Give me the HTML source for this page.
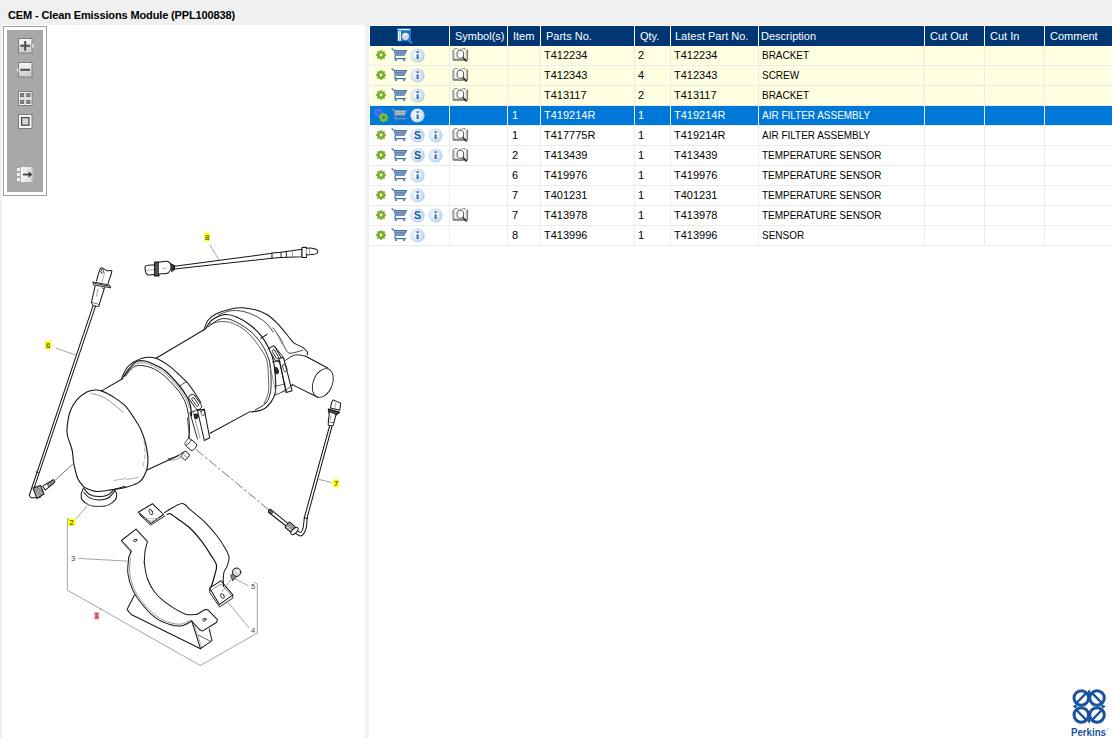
<!DOCTYPE html>
<html><head><meta charset="utf-8"><style>
html,body{margin:0;padding:0;}
body{width:1112px;height:738px;overflow:hidden;background:#f0f0f0;position:relative;font-family:"Liberation Sans",sans-serif;}
.abs{position:absolute;}
.ic{position:absolute;}
.title{position:absolute;left:8px;top:9px;font-size:11px;font-weight:bold;color:#000;white-space:nowrap;letter-spacing:-0.13px;}
.panel{position:absolute;background:#fff;}
.hdr{position:absolute;top:26px;height:20px;background:#003773;}
.ht{position:absolute;top:30px;color:#fff;font-size:11px;white-space:nowrap;}
.row{position:absolute;left:370px;width:742px;height:19px;}
.hl{position:absolute;left:370px;width:742px;height:1px;background:#ebebeb;}
.vl{position:absolute;width:1px;background:#ebebeb;}
.ct{position:absolute;font-size:11px;white-space:nowrap;color:#000;}
.up{transform:scaleX(0.906);transform-origin:0 0;}
</style></head><body>
<div class="title">CEM - Clean Emissions Module (PPL100838)</div>
<div class="panel" style="left:2px;top:25px;width:363px;height:713px;"></div>
<div class="panel" style="left:369px;top:25px;width:743px;height:713px;"></div>
<div class="abs" style="left:3px;top:26px;width:42px;height:168px;border:1px solid #a0a0a0;background:#fff;"></div>
<div class="abs" style="left:7px;top:30px;width:36px;height:162px;background:#a8a8a8;"></div>

<div class="hdr" style="left:370px;width:742px;"></div>
<div class="abs" style="left:449px;top:26px;width:1px;height:20px;background:#fff;"></div>
<div class="abs" style="left:507px;top:26px;width:1px;height:20px;background:#fff;"></div>
<div class="abs" style="left:540px;top:26px;width:1px;height:20px;background:#fff;"></div>
<div class="abs" style="left:634px;top:26px;width:1px;height:20px;background:#fff;"></div>
<div class="abs" style="left:670px;top:26px;width:1px;height:20px;background:#fff;"></div>
<div class="abs" style="left:758px;top:26px;width:1px;height:20px;background:#fff;"></div>
<div class="abs" style="left:924px;top:26px;width:1px;height:20px;background:#fff;"></div>
<div class="abs" style="left:984px;top:26px;width:1px;height:20px;background:#fff;"></div>
<div class="abs" style="left:1044px;top:26px;width:1px;height:20px;background:#fff;"></div>
<div class="ht" style="left:455px;">Symbol(s)</div>
<div class="ht" style="left:513px;">Item</div>
<div class="ht" style="left:546px;">Parts No.</div>
<div class="ht" style="left:640px;">Qty.</div>
<div class="ht" style="left:675px;">Latest Part No.</div>
<div class="ht" style="left:761px;">Description</div>
<div class="ht" style="left:930px;">Cut Out</div>
<div class="ht" style="left:990px;">Cut In</div>
<div class="ht" style="left:1050px;">Comment</div>
<svg class="ic" style="left:397px;top:28px" width="17" height="17" viewBox="0 0 17 17"><rect x="0" y="0" width="14" height="13.5" fill="#1f74c2"/><rect x="1" y="1" width="12" height="1.2" fill="#f4f8fc"/><rect x="1" y="3.2" width="3" height="9.5" fill="#f4f8fc"/><path d="M2.6 4.5v0.8M2.6 6.5v0.8M2.6 8.5v0.8M2.6 10.5v0.8" stroke="#1f74c2" stroke-width="0.9"/><circle cx="8.5" cy="8.3" r="4.6" fill="#1f74c2"/><circle cx="8.5" cy="8.3" r="3.6" fill="#d4d8de"/><path d="M6.8 6.6c1-0.7 2.4-0.7 3.3 0.2" stroke="#fff" stroke-width="1.1" fill="none"/><path d="M11.2 12l3.8 3.3" stroke="#2a7ccc" stroke-width="2.4"/></svg>
<div class="row" style="top:46px;background:#ffffe1;"></div>
<div class="hl" style="top:65px;"></div>
<svg class="ic" style="left:375px;top:49px" width="12" height="12" viewBox="0 0 12 12"><circle cx="6" cy="6" r="1.6" fill="#eaffd0"/><path d="M5.50 0.92 L6.50 0.92 L7.16 2.17 L7.89 2.47 L9.24 2.06 L9.94 2.76 L9.53 4.11 L9.83 4.84 L11.08 5.50 L11.08 6.50 L9.83 7.16 L9.53 7.89 L9.94 9.24 L9.24 9.94 L7.89 9.53 L7.16 9.83 L6.50 11.08 L5.50 11.08 L4.84 9.83 L4.11 9.53 L2.76 9.94 L2.06 9.24 L2.47 7.89 L2.17 7.16 L0.92 6.50 L0.92 5.50 L2.17 4.84 L2.47 4.11 L2.06 2.76 L2.76 2.06 L4.11 2.47 L4.84 2.17ZM7.40 6.00A1.4 1.4 0 1 0 4.60 6.00A1.4 1.4 0 1 0 7.40 6.00Z" fill="#79ad2b" fill-rule="evenodd"/></svg>
<svg class="ic" style="left:391px;top:48px" width="17" height="14" viewBox="0 0 17 14"><path d="M0.6 0.6l2.3 1.6" stroke="#4870a8" stroke-width="1.3"/><path d="M2.8 2.1h13.4l-2.6 5.6h-9.8z" fill="#4870a8"/><rect x="4.30" y="3.2" width="1.1" height="1.1" fill="#fff" opacity="0.85"/><rect x="4.30" y="5.3" width="1.1" height="1.1" fill="#fff" opacity="0.85"/><rect x="6.35" y="3.2" width="1.1" height="1.1" fill="#fff" opacity="0.85"/><rect x="6.35" y="5.3" width="1.1" height="1.1" fill="#fff" opacity="0.85"/><rect x="8.40" y="3.2" width="1.1" height="1.1" fill="#fff" opacity="0.85"/><rect x="8.40" y="5.3" width="1.1" height="1.1" fill="#fff" opacity="0.85"/><rect x="10.45" y="3.2" width="1.1" height="1.1" fill="#fff" opacity="0.85"/><rect x="10.45" y="5.3" width="1.1" height="1.1" fill="#fff" opacity="0.85"/><rect x="12.50" y="3.2" width="1.1" height="1.1" fill="#fff" opacity="0.85"/><rect x="12.50" y="5.3" width="1.1" height="1.1" fill="#fff" opacity="0.85"/><path d="M4 7.5v3M3.6 10.6h11.3" stroke="#4870a8" stroke-width="1.2"/><circle cx="4.8" cy="12.1" r="1.1" fill="#3f7fcc"/><circle cx="13" cy="12.1" r="1.1" fill="#3f7fcc"/></svg>
<svg class="ic" style="left:410px;top:48px" width="15" height="15" viewBox="0 0 15 15"><defs><radialGradient id="ig410_48" cx="0.42" cy="0.45" r="0.62"><stop offset="0" stop-color="#f8fbfe"/><stop offset="0.5" stop-color="#dfeaf6"/><stop offset="0.85" stop-color="#bcd5ec"/><stop offset="1" stop-color="#98bde2"/></radialGradient></defs><circle cx="7.5" cy="7.5" r="7.1" fill="url(#ig410_48)"/><rect x="6.6" y="6.4" width="2" height="4.6" fill="#3a64a8"/><rect x="6.6" y="3.2" width="2" height="1.8" fill="#3a64a8"/></svg>
<svg class="ic" style="left:452px;top:47px" width="17" height="15" viewBox="0 0 17 15"><path d="M1 2.6v10.6h14.6v-10.6" fill="#c8c8c8" stroke="#77735a" stroke-width="1"/><path d="M2.4 1.6h2.8M10.4 1.6h2.9" stroke="#8c8660" stroke-width="1.2"/><path d="M1.8 2.3c2 -0.8 4.1 -0.8 5.8 0.4c1.8 -1.2 4 -1.2 6.6 -0.4v10c-2.3 -0.6 -4.6 -0.4 -6.6 0.7c-1.9 -1.1 -3.9 -1.2 -5.8 -0.7z" fill="#f7f7f7" stroke="#9a9a9a" stroke-width="0.5"/><path d="M2.5 3.5v8.5" stroke="#d0d0d0" stroke-width="1"/><path d="M1.6 12.6c2 -0.6 4.1 -0.4 6 0.8c2 -1.1 4.5 -1.2 6.8 -0.7" fill="none" stroke="#6a6a6a" stroke-width="0.9"/><ellipse cx="8.3" cy="7.3" rx="3.3" ry="4.1" fill="#fcfcfc" stroke="#3c3c3c" stroke-width="0.9"/><path d="M10.8 10.3l3.8 4.2" stroke="#2a2a2a" stroke-width="1.5"/></svg>
<div class="ct" style="left:512px;top:49px;color:#000"></div>
<div class="ct" style="left:544px;top:49px;color:#000">T412234</div>
<div class="ct" style="left:638px;top:49px;color:#000">2</div>
<div class="ct" style="left:674px;top:49px;color:#000">T412234</div>
<div class="ct up" style="left:762px;top:49px;color:#000">BRACKET</div>
<div class="row" style="top:66px;background:#ffffe1;"></div>
<div class="hl" style="top:85px;"></div>
<svg class="ic" style="left:375px;top:69px" width="12" height="12" viewBox="0 0 12 12"><circle cx="6" cy="6" r="1.6" fill="#eaffd0"/><path d="M5.50 0.92 L6.50 0.92 L7.16 2.17 L7.89 2.47 L9.24 2.06 L9.94 2.76 L9.53 4.11 L9.83 4.84 L11.08 5.50 L11.08 6.50 L9.83 7.16 L9.53 7.89 L9.94 9.24 L9.24 9.94 L7.89 9.53 L7.16 9.83 L6.50 11.08 L5.50 11.08 L4.84 9.83 L4.11 9.53 L2.76 9.94 L2.06 9.24 L2.47 7.89 L2.17 7.16 L0.92 6.50 L0.92 5.50 L2.17 4.84 L2.47 4.11 L2.06 2.76 L2.76 2.06 L4.11 2.47 L4.84 2.17ZM7.40 6.00A1.4 1.4 0 1 0 4.60 6.00A1.4 1.4 0 1 0 7.40 6.00Z" fill="#79ad2b" fill-rule="evenodd"/></svg>
<svg class="ic" style="left:391px;top:68px" width="17" height="14" viewBox="0 0 17 14"><path d="M0.6 0.6l2.3 1.6" stroke="#4870a8" stroke-width="1.3"/><path d="M2.8 2.1h13.4l-2.6 5.6h-9.8z" fill="#4870a8"/><rect x="4.30" y="3.2" width="1.1" height="1.1" fill="#fff" opacity="0.85"/><rect x="4.30" y="5.3" width="1.1" height="1.1" fill="#fff" opacity="0.85"/><rect x="6.35" y="3.2" width="1.1" height="1.1" fill="#fff" opacity="0.85"/><rect x="6.35" y="5.3" width="1.1" height="1.1" fill="#fff" opacity="0.85"/><rect x="8.40" y="3.2" width="1.1" height="1.1" fill="#fff" opacity="0.85"/><rect x="8.40" y="5.3" width="1.1" height="1.1" fill="#fff" opacity="0.85"/><rect x="10.45" y="3.2" width="1.1" height="1.1" fill="#fff" opacity="0.85"/><rect x="10.45" y="5.3" width="1.1" height="1.1" fill="#fff" opacity="0.85"/><rect x="12.50" y="3.2" width="1.1" height="1.1" fill="#fff" opacity="0.85"/><rect x="12.50" y="5.3" width="1.1" height="1.1" fill="#fff" opacity="0.85"/><path d="M4 7.5v3M3.6 10.6h11.3" stroke="#4870a8" stroke-width="1.2"/><circle cx="4.8" cy="12.1" r="1.1" fill="#3f7fcc"/><circle cx="13" cy="12.1" r="1.1" fill="#3f7fcc"/></svg>
<svg class="ic" style="left:410px;top:68px" width="15" height="15" viewBox="0 0 15 15"><defs><radialGradient id="ig410_68" cx="0.42" cy="0.45" r="0.62"><stop offset="0" stop-color="#f8fbfe"/><stop offset="0.5" stop-color="#dfeaf6"/><stop offset="0.85" stop-color="#bcd5ec"/><stop offset="1" stop-color="#98bde2"/></radialGradient></defs><circle cx="7.5" cy="7.5" r="7.1" fill="url(#ig410_68)"/><rect x="6.6" y="6.4" width="2" height="4.6" fill="#3a64a8"/><rect x="6.6" y="3.2" width="2" height="1.8" fill="#3a64a8"/></svg>
<svg class="ic" style="left:452px;top:67px" width="17" height="15" viewBox="0 0 17 15"><path d="M1 2.6v10.6h14.6v-10.6" fill="#c8c8c8" stroke="#77735a" stroke-width="1"/><path d="M2.4 1.6h2.8M10.4 1.6h2.9" stroke="#8c8660" stroke-width="1.2"/><path d="M1.8 2.3c2 -0.8 4.1 -0.8 5.8 0.4c1.8 -1.2 4 -1.2 6.6 -0.4v10c-2.3 -0.6 -4.6 -0.4 -6.6 0.7c-1.9 -1.1 -3.9 -1.2 -5.8 -0.7z" fill="#f7f7f7" stroke="#9a9a9a" stroke-width="0.5"/><path d="M2.5 3.5v8.5" stroke="#d0d0d0" stroke-width="1"/><path d="M1.6 12.6c2 -0.6 4.1 -0.4 6 0.8c2 -1.1 4.5 -1.2 6.8 -0.7" fill="none" stroke="#6a6a6a" stroke-width="0.9"/><ellipse cx="8.3" cy="7.3" rx="3.3" ry="4.1" fill="#fcfcfc" stroke="#3c3c3c" stroke-width="0.9"/><path d="M10.8 10.3l3.8 4.2" stroke="#2a2a2a" stroke-width="1.5"/></svg>
<div class="ct" style="left:512px;top:69px;color:#000"></div>
<div class="ct" style="left:544px;top:69px;color:#000">T412343</div>
<div class="ct" style="left:638px;top:69px;color:#000">4</div>
<div class="ct" style="left:674px;top:69px;color:#000">T412343</div>
<div class="ct up" style="left:762px;top:69px;color:#000">SCREW</div>
<div class="row" style="top:86px;background:#ffffe1;"></div>
<div class="hl" style="top:105px;"></div>
<svg class="ic" style="left:375px;top:89px" width="12" height="12" viewBox="0 0 12 12"><circle cx="6" cy="6" r="1.6" fill="#eaffd0"/><path d="M5.50 0.92 L6.50 0.92 L7.16 2.17 L7.89 2.47 L9.24 2.06 L9.94 2.76 L9.53 4.11 L9.83 4.84 L11.08 5.50 L11.08 6.50 L9.83 7.16 L9.53 7.89 L9.94 9.24 L9.24 9.94 L7.89 9.53 L7.16 9.83 L6.50 11.08 L5.50 11.08 L4.84 9.83 L4.11 9.53 L2.76 9.94 L2.06 9.24 L2.47 7.89 L2.17 7.16 L0.92 6.50 L0.92 5.50 L2.17 4.84 L2.47 4.11 L2.06 2.76 L2.76 2.06 L4.11 2.47 L4.84 2.17ZM7.40 6.00A1.4 1.4 0 1 0 4.60 6.00A1.4 1.4 0 1 0 7.40 6.00Z" fill="#79ad2b" fill-rule="evenodd"/></svg>
<svg class="ic" style="left:391px;top:88px" width="17" height="14" viewBox="0 0 17 14"><path d="M0.6 0.6l2.3 1.6" stroke="#4870a8" stroke-width="1.3"/><path d="M2.8 2.1h13.4l-2.6 5.6h-9.8z" fill="#4870a8"/><rect x="4.30" y="3.2" width="1.1" height="1.1" fill="#fff" opacity="0.85"/><rect x="4.30" y="5.3" width="1.1" height="1.1" fill="#fff" opacity="0.85"/><rect x="6.35" y="3.2" width="1.1" height="1.1" fill="#fff" opacity="0.85"/><rect x="6.35" y="5.3" width="1.1" height="1.1" fill="#fff" opacity="0.85"/><rect x="8.40" y="3.2" width="1.1" height="1.1" fill="#fff" opacity="0.85"/><rect x="8.40" y="5.3" width="1.1" height="1.1" fill="#fff" opacity="0.85"/><rect x="10.45" y="3.2" width="1.1" height="1.1" fill="#fff" opacity="0.85"/><rect x="10.45" y="5.3" width="1.1" height="1.1" fill="#fff" opacity="0.85"/><rect x="12.50" y="3.2" width="1.1" height="1.1" fill="#fff" opacity="0.85"/><rect x="12.50" y="5.3" width="1.1" height="1.1" fill="#fff" opacity="0.85"/><path d="M4 7.5v3M3.6 10.6h11.3" stroke="#4870a8" stroke-width="1.2"/><circle cx="4.8" cy="12.1" r="1.1" fill="#3f7fcc"/><circle cx="13" cy="12.1" r="1.1" fill="#3f7fcc"/></svg>
<svg class="ic" style="left:410px;top:88px" width="15" height="15" viewBox="0 0 15 15"><defs><radialGradient id="ig410_88" cx="0.42" cy="0.45" r="0.62"><stop offset="0" stop-color="#f8fbfe"/><stop offset="0.5" stop-color="#dfeaf6"/><stop offset="0.85" stop-color="#bcd5ec"/><stop offset="1" stop-color="#98bde2"/></radialGradient></defs><circle cx="7.5" cy="7.5" r="7.1" fill="url(#ig410_88)"/><rect x="6.6" y="6.4" width="2" height="4.6" fill="#3a64a8"/><rect x="6.6" y="3.2" width="2" height="1.8" fill="#3a64a8"/></svg>
<svg class="ic" style="left:452px;top:87px" width="17" height="15" viewBox="0 0 17 15"><path d="M1 2.6v10.6h14.6v-10.6" fill="#c8c8c8" stroke="#77735a" stroke-width="1"/><path d="M2.4 1.6h2.8M10.4 1.6h2.9" stroke="#8c8660" stroke-width="1.2"/><path d="M1.8 2.3c2 -0.8 4.1 -0.8 5.8 0.4c1.8 -1.2 4 -1.2 6.6 -0.4v10c-2.3 -0.6 -4.6 -0.4 -6.6 0.7c-1.9 -1.1 -3.9 -1.2 -5.8 -0.7z" fill="#f7f7f7" stroke="#9a9a9a" stroke-width="0.5"/><path d="M2.5 3.5v8.5" stroke="#d0d0d0" stroke-width="1"/><path d="M1.6 12.6c2 -0.6 4.1 -0.4 6 0.8c2 -1.1 4.5 -1.2 6.8 -0.7" fill="none" stroke="#6a6a6a" stroke-width="0.9"/><ellipse cx="8.3" cy="7.3" rx="3.3" ry="4.1" fill="#fcfcfc" stroke="#3c3c3c" stroke-width="0.9"/><path d="M10.8 10.3l3.8 4.2" stroke="#2a2a2a" stroke-width="1.5"/></svg>
<div class="ct" style="left:512px;top:89px;color:#000"></div>
<div class="ct" style="left:544px;top:89px;color:#000">T413117</div>
<div class="ct" style="left:638px;top:89px;color:#000">2</div>
<div class="ct" style="left:674px;top:89px;color:#000">T413117</div>
<div class="ct up" style="left:762px;top:89px;color:#000">BRACKET</div>
<div class="row" style="top:106px;background:#0078d7;"></div>
<div class="hl" style="top:125px;"></div>
<svg class="ic" style="left:373px;top:107px" width="17" height="17" viewBox="0 0 17 17"><path d="M5.01 0.52 L5.99 0.52 L6.63 1.77 L7.34 2.06 L8.67 1.63 L9.37 2.33 L8.94 3.66 L9.23 4.37 L10.48 5.01 L10.48 5.99 L9.23 6.63 L8.94 7.34 L9.37 8.67 L8.67 9.37 L7.34 8.94 L6.63 9.23 L5.99 10.48 L5.01 10.48 L4.37 9.23 L3.66 8.94 L2.33 9.37 L1.63 8.67 L2.06 7.34 L1.77 6.63 L0.52 5.99 L0.52 5.01 L1.77 4.37 L2.06 3.66 L1.63 2.33 L2.33 1.63 L3.66 2.06 L4.37 1.77ZM6.90 5.50A1.4 1.4 0 1 0 4.10 5.50A1.4 1.4 0 1 0 6.90 5.50Z" fill="#4f6ff0" fill-rule="evenodd"/><path d="M10.12 5.72 L11.08 5.72 L11.70 6.96 L12.39 7.25 L13.71 6.81 L14.39 7.49 L13.95 8.81 L14.24 9.50 L15.48 10.12 L15.48 11.08 L14.24 11.70 L13.95 12.39 L14.39 13.71 L13.71 14.39 L12.39 13.95 L11.70 14.24 L11.08 15.48 L10.12 15.48 L9.50 14.24 L8.81 13.95 L7.49 14.39 L6.81 13.71 L7.25 12.39 L6.96 11.70 L5.72 11.08 L5.72 10.12 L6.96 9.50 L7.25 8.81 L6.81 7.49 L7.49 6.81 L8.81 7.25 L9.50 6.96ZM12.00 10.60A1.4 1.4 0 1 0 9.20 10.60A1.4 1.4 0 1 0 12.00 10.60Z" fill="#84c021" fill-rule="evenodd"/></svg>
<svg class="ic" style="left:391px;top:108px" width="17" height="14" viewBox="0 0 17 14"><path d="M0.6 0.6l2.3 1.6" stroke="#8794a6" stroke-width="1.3"/><path d="M2.8 2.1h13.4l-2.6 5.6h-9.8z" fill="#8794a6"/><rect x="4.30" y="3.2" width="1.1" height="1.1" fill="#fff" opacity="0.85"/><rect x="4.30" y="5.3" width="1.1" height="1.1" fill="#fff" opacity="0.85"/><rect x="6.35" y="3.2" width="1.1" height="1.1" fill="#fff" opacity="0.85"/><rect x="6.35" y="5.3" width="1.1" height="1.1" fill="#fff" opacity="0.85"/><rect x="8.40" y="3.2" width="1.1" height="1.1" fill="#fff" opacity="0.85"/><rect x="8.40" y="5.3" width="1.1" height="1.1" fill="#fff" opacity="0.85"/><rect x="10.45" y="3.2" width="1.1" height="1.1" fill="#fff" opacity="0.85"/><rect x="10.45" y="5.3" width="1.1" height="1.1" fill="#fff" opacity="0.85"/><rect x="12.50" y="3.2" width="1.1" height="1.1" fill="#fff" opacity="0.85"/><rect x="12.50" y="5.3" width="1.1" height="1.1" fill="#fff" opacity="0.85"/><path d="M4 7.5v3M3.6 10.6h11.3" stroke="#8794a6" stroke-width="1.2"/><circle cx="4.8" cy="12.1" r="1.1" fill="#3f7fcc"/><circle cx="13" cy="12.1" r="1.1" fill="#3f7fcc"/></svg>
<svg class="ic" style="left:410px;top:108px" width="15" height="15" viewBox="0 0 15 15"><defs><radialGradient id="ig410_108" cx="0.42" cy="0.45" r="0.62"><stop offset="0" stop-color="#f8fbfe"/><stop offset="0.5" stop-color="#dfeaf6"/><stop offset="0.85" stop-color="#bcd5ec"/><stop offset="1" stop-color="#98bde2"/></radialGradient></defs><circle cx="7.5" cy="7.5" r="7.1" fill="url(#ig410_108)"/><rect x="6.6" y="6.4" width="2" height="4.6" fill="#3a64a8"/><rect x="6.6" y="3.2" width="2" height="1.8" fill="#3a64a8"/></svg>
<div class="ct" style="left:512px;top:109px;color:#fff">1</div>
<div class="ct" style="left:544px;top:109px;color:#fff">T419214R</div>
<div class="ct" style="left:638px;top:109px;color:#fff">1</div>
<div class="ct" style="left:674px;top:109px;color:#fff">T419214R</div>
<div class="ct up" style="left:762px;top:109px;color:#fff">AIR FILTER ASSEMBLY</div>
<div class="row" style="top:126px;background:#ffffff;"></div>
<div class="hl" style="top:145px;"></div>
<svg class="ic" style="left:375px;top:129px" width="12" height="12" viewBox="0 0 12 12"><circle cx="6" cy="6" r="1.6" fill="#eaffd0"/><path d="M5.50 0.92 L6.50 0.92 L7.16 2.17 L7.89 2.47 L9.24 2.06 L9.94 2.76 L9.53 4.11 L9.83 4.84 L11.08 5.50 L11.08 6.50 L9.83 7.16 L9.53 7.89 L9.94 9.24 L9.24 9.94 L7.89 9.53 L7.16 9.83 L6.50 11.08 L5.50 11.08 L4.84 9.83 L4.11 9.53 L2.76 9.94 L2.06 9.24 L2.47 7.89 L2.17 7.16 L0.92 6.50 L0.92 5.50 L2.17 4.84 L2.47 4.11 L2.06 2.76 L2.76 2.06 L4.11 2.47 L4.84 2.17ZM7.40 6.00A1.4 1.4 0 1 0 4.60 6.00A1.4 1.4 0 1 0 7.40 6.00Z" fill="#79ad2b" fill-rule="evenodd"/></svg>
<svg class="ic" style="left:391px;top:128px" width="17" height="14" viewBox="0 0 17 14"><path d="M0.6 0.6l2.3 1.6" stroke="#4870a8" stroke-width="1.3"/><path d="M2.8 2.1h13.4l-2.6 5.6h-9.8z" fill="#4870a8"/><rect x="4.30" y="3.2" width="1.1" height="1.1" fill="#fff" opacity="0.85"/><rect x="4.30" y="5.3" width="1.1" height="1.1" fill="#fff" opacity="0.85"/><rect x="6.35" y="3.2" width="1.1" height="1.1" fill="#fff" opacity="0.85"/><rect x="6.35" y="5.3" width="1.1" height="1.1" fill="#fff" opacity="0.85"/><rect x="8.40" y="3.2" width="1.1" height="1.1" fill="#fff" opacity="0.85"/><rect x="8.40" y="5.3" width="1.1" height="1.1" fill="#fff" opacity="0.85"/><rect x="10.45" y="3.2" width="1.1" height="1.1" fill="#fff" opacity="0.85"/><rect x="10.45" y="5.3" width="1.1" height="1.1" fill="#fff" opacity="0.85"/><rect x="12.50" y="3.2" width="1.1" height="1.1" fill="#fff" opacity="0.85"/><rect x="12.50" y="5.3" width="1.1" height="1.1" fill="#fff" opacity="0.85"/><path d="M4 7.5v3M3.6 10.6h11.3" stroke="#4870a8" stroke-width="1.2"/><circle cx="4.8" cy="12.1" r="1.1" fill="#3f7fcc"/><circle cx="13" cy="12.1" r="1.1" fill="#3f7fcc"/></svg>
<svg class="ic" style="left:410px;top:128px" width="15" height="15" viewBox="0 0 15 15"><defs><radialGradient id="sg410_128" cx="0.42" cy="0.45" r="0.62"><stop offset="0" stop-color="#f8fbfe"/><stop offset="0.5" stop-color="#dfeaf6"/><stop offset="0.85" stop-color="#bcd5ec"/><stop offset="1" stop-color="#98bde2"/></radialGradient></defs><circle cx="7.5" cy="7.5" r="7.1" fill="url(#sg410_128)"/><text x="7.4" y="11.3" text-anchor="middle" font-family="Liberation Sans" font-weight="bold" font-size="10.5" fill="#0e5a96">S</text></svg>
<svg class="ic" style="left:428px;top:128px" width="15" height="15" viewBox="0 0 15 15"><defs><radialGradient id="ig428_128" cx="0.42" cy="0.45" r="0.62"><stop offset="0" stop-color="#f8fbfe"/><stop offset="0.5" stop-color="#dfeaf6"/><stop offset="0.85" stop-color="#bcd5ec"/><stop offset="1" stop-color="#98bde2"/></radialGradient></defs><circle cx="7.5" cy="7.5" r="7.1" fill="url(#ig428_128)"/><rect x="6.6" y="6.4" width="2" height="4.6" fill="#3a64a8"/><rect x="6.6" y="3.2" width="2" height="1.8" fill="#3a64a8"/></svg>
<svg class="ic" style="left:452px;top:127px" width="17" height="15" viewBox="0 0 17 15"><path d="M1 2.6v10.6h14.6v-10.6" fill="#c8c8c8" stroke="#77735a" stroke-width="1"/><path d="M2.4 1.6h2.8M10.4 1.6h2.9" stroke="#8c8660" stroke-width="1.2"/><path d="M1.8 2.3c2 -0.8 4.1 -0.8 5.8 0.4c1.8 -1.2 4 -1.2 6.6 -0.4v10c-2.3 -0.6 -4.6 -0.4 -6.6 0.7c-1.9 -1.1 -3.9 -1.2 -5.8 -0.7z" fill="#f7f7f7" stroke="#9a9a9a" stroke-width="0.5"/><path d="M2.5 3.5v8.5" stroke="#d0d0d0" stroke-width="1"/><path d="M1.6 12.6c2 -0.6 4.1 -0.4 6 0.8c2 -1.1 4.5 -1.2 6.8 -0.7" fill="none" stroke="#6a6a6a" stroke-width="0.9"/><ellipse cx="8.3" cy="7.3" rx="3.3" ry="4.1" fill="#fcfcfc" stroke="#3c3c3c" stroke-width="0.9"/><path d="M10.8 10.3l3.8 4.2" stroke="#2a2a2a" stroke-width="1.5"/></svg>
<div class="ct" style="left:512px;top:129px;color:#000">1</div>
<div class="ct" style="left:544px;top:129px;color:#000">T417775R</div>
<div class="ct" style="left:638px;top:129px;color:#000">1</div>
<div class="ct" style="left:674px;top:129px;color:#000">T419214R</div>
<div class="ct up" style="left:762px;top:129px;color:#000">AIR FILTER ASSEMBLY</div>
<div class="row" style="top:146px;background:#ffffff;"></div>
<div class="hl" style="top:165px;"></div>
<svg class="ic" style="left:375px;top:149px" width="12" height="12" viewBox="0 0 12 12"><circle cx="6" cy="6" r="1.6" fill="#eaffd0"/><path d="M5.50 0.92 L6.50 0.92 L7.16 2.17 L7.89 2.47 L9.24 2.06 L9.94 2.76 L9.53 4.11 L9.83 4.84 L11.08 5.50 L11.08 6.50 L9.83 7.16 L9.53 7.89 L9.94 9.24 L9.24 9.94 L7.89 9.53 L7.16 9.83 L6.50 11.08 L5.50 11.08 L4.84 9.83 L4.11 9.53 L2.76 9.94 L2.06 9.24 L2.47 7.89 L2.17 7.16 L0.92 6.50 L0.92 5.50 L2.17 4.84 L2.47 4.11 L2.06 2.76 L2.76 2.06 L4.11 2.47 L4.84 2.17ZM7.40 6.00A1.4 1.4 0 1 0 4.60 6.00A1.4 1.4 0 1 0 7.40 6.00Z" fill="#79ad2b" fill-rule="evenodd"/></svg>
<svg class="ic" style="left:391px;top:148px" width="17" height="14" viewBox="0 0 17 14"><path d="M0.6 0.6l2.3 1.6" stroke="#4870a8" stroke-width="1.3"/><path d="M2.8 2.1h13.4l-2.6 5.6h-9.8z" fill="#4870a8"/><rect x="4.30" y="3.2" width="1.1" height="1.1" fill="#fff" opacity="0.85"/><rect x="4.30" y="5.3" width="1.1" height="1.1" fill="#fff" opacity="0.85"/><rect x="6.35" y="3.2" width="1.1" height="1.1" fill="#fff" opacity="0.85"/><rect x="6.35" y="5.3" width="1.1" height="1.1" fill="#fff" opacity="0.85"/><rect x="8.40" y="3.2" width="1.1" height="1.1" fill="#fff" opacity="0.85"/><rect x="8.40" y="5.3" width="1.1" height="1.1" fill="#fff" opacity="0.85"/><rect x="10.45" y="3.2" width="1.1" height="1.1" fill="#fff" opacity="0.85"/><rect x="10.45" y="5.3" width="1.1" height="1.1" fill="#fff" opacity="0.85"/><rect x="12.50" y="3.2" width="1.1" height="1.1" fill="#fff" opacity="0.85"/><rect x="12.50" y="5.3" width="1.1" height="1.1" fill="#fff" opacity="0.85"/><path d="M4 7.5v3M3.6 10.6h11.3" stroke="#4870a8" stroke-width="1.2"/><circle cx="4.8" cy="12.1" r="1.1" fill="#3f7fcc"/><circle cx="13" cy="12.1" r="1.1" fill="#3f7fcc"/></svg>
<svg class="ic" style="left:410px;top:148px" width="15" height="15" viewBox="0 0 15 15"><defs><radialGradient id="sg410_148" cx="0.42" cy="0.45" r="0.62"><stop offset="0" stop-color="#f8fbfe"/><stop offset="0.5" stop-color="#dfeaf6"/><stop offset="0.85" stop-color="#bcd5ec"/><stop offset="1" stop-color="#98bde2"/></radialGradient></defs><circle cx="7.5" cy="7.5" r="7.1" fill="url(#sg410_148)"/><text x="7.4" y="11.3" text-anchor="middle" font-family="Liberation Sans" font-weight="bold" font-size="10.5" fill="#0e5a96">S</text></svg>
<svg class="ic" style="left:428px;top:148px" width="15" height="15" viewBox="0 0 15 15"><defs><radialGradient id="ig428_148" cx="0.42" cy="0.45" r="0.62"><stop offset="0" stop-color="#f8fbfe"/><stop offset="0.5" stop-color="#dfeaf6"/><stop offset="0.85" stop-color="#bcd5ec"/><stop offset="1" stop-color="#98bde2"/></radialGradient></defs><circle cx="7.5" cy="7.5" r="7.1" fill="url(#ig428_148)"/><rect x="6.6" y="6.4" width="2" height="4.6" fill="#3a64a8"/><rect x="6.6" y="3.2" width="2" height="1.8" fill="#3a64a8"/></svg>
<svg class="ic" style="left:452px;top:147px" width="17" height="15" viewBox="0 0 17 15"><path d="M1 2.6v10.6h14.6v-10.6" fill="#c8c8c8" stroke="#77735a" stroke-width="1"/><path d="M2.4 1.6h2.8M10.4 1.6h2.9" stroke="#8c8660" stroke-width="1.2"/><path d="M1.8 2.3c2 -0.8 4.1 -0.8 5.8 0.4c1.8 -1.2 4 -1.2 6.6 -0.4v10c-2.3 -0.6 -4.6 -0.4 -6.6 0.7c-1.9 -1.1 -3.9 -1.2 -5.8 -0.7z" fill="#f7f7f7" stroke="#9a9a9a" stroke-width="0.5"/><path d="M2.5 3.5v8.5" stroke="#d0d0d0" stroke-width="1"/><path d="M1.6 12.6c2 -0.6 4.1 -0.4 6 0.8c2 -1.1 4.5 -1.2 6.8 -0.7" fill="none" stroke="#6a6a6a" stroke-width="0.9"/><ellipse cx="8.3" cy="7.3" rx="3.3" ry="4.1" fill="#fcfcfc" stroke="#3c3c3c" stroke-width="0.9"/><path d="M10.8 10.3l3.8 4.2" stroke="#2a2a2a" stroke-width="1.5"/></svg>
<div class="ct" style="left:512px;top:149px;color:#000">2</div>
<div class="ct" style="left:544px;top:149px;color:#000">T413439</div>
<div class="ct" style="left:638px;top:149px;color:#000">1</div>
<div class="ct" style="left:674px;top:149px;color:#000">T413439</div>
<div class="ct up" style="left:762px;top:149px;color:#000">TEMPERATURE SENSOR</div>
<div class="row" style="top:166px;background:#ffffff;"></div>
<div class="hl" style="top:185px;"></div>
<svg class="ic" style="left:375px;top:169px" width="12" height="12" viewBox="0 0 12 12"><circle cx="6" cy="6" r="1.6" fill="#eaffd0"/><path d="M5.50 0.92 L6.50 0.92 L7.16 2.17 L7.89 2.47 L9.24 2.06 L9.94 2.76 L9.53 4.11 L9.83 4.84 L11.08 5.50 L11.08 6.50 L9.83 7.16 L9.53 7.89 L9.94 9.24 L9.24 9.94 L7.89 9.53 L7.16 9.83 L6.50 11.08 L5.50 11.08 L4.84 9.83 L4.11 9.53 L2.76 9.94 L2.06 9.24 L2.47 7.89 L2.17 7.16 L0.92 6.50 L0.92 5.50 L2.17 4.84 L2.47 4.11 L2.06 2.76 L2.76 2.06 L4.11 2.47 L4.84 2.17ZM7.40 6.00A1.4 1.4 0 1 0 4.60 6.00A1.4 1.4 0 1 0 7.40 6.00Z" fill="#79ad2b" fill-rule="evenodd"/></svg>
<svg class="ic" style="left:391px;top:168px" width="17" height="14" viewBox="0 0 17 14"><path d="M0.6 0.6l2.3 1.6" stroke="#4870a8" stroke-width="1.3"/><path d="M2.8 2.1h13.4l-2.6 5.6h-9.8z" fill="#4870a8"/><rect x="4.30" y="3.2" width="1.1" height="1.1" fill="#fff" opacity="0.85"/><rect x="4.30" y="5.3" width="1.1" height="1.1" fill="#fff" opacity="0.85"/><rect x="6.35" y="3.2" width="1.1" height="1.1" fill="#fff" opacity="0.85"/><rect x="6.35" y="5.3" width="1.1" height="1.1" fill="#fff" opacity="0.85"/><rect x="8.40" y="3.2" width="1.1" height="1.1" fill="#fff" opacity="0.85"/><rect x="8.40" y="5.3" width="1.1" height="1.1" fill="#fff" opacity="0.85"/><rect x="10.45" y="3.2" width="1.1" height="1.1" fill="#fff" opacity="0.85"/><rect x="10.45" y="5.3" width="1.1" height="1.1" fill="#fff" opacity="0.85"/><rect x="12.50" y="3.2" width="1.1" height="1.1" fill="#fff" opacity="0.85"/><rect x="12.50" y="5.3" width="1.1" height="1.1" fill="#fff" opacity="0.85"/><path d="M4 7.5v3M3.6 10.6h11.3" stroke="#4870a8" stroke-width="1.2"/><circle cx="4.8" cy="12.1" r="1.1" fill="#3f7fcc"/><circle cx="13" cy="12.1" r="1.1" fill="#3f7fcc"/></svg>
<svg class="ic" style="left:410px;top:168px" width="15" height="15" viewBox="0 0 15 15"><defs><radialGradient id="ig410_168" cx="0.42" cy="0.45" r="0.62"><stop offset="0" stop-color="#f8fbfe"/><stop offset="0.5" stop-color="#dfeaf6"/><stop offset="0.85" stop-color="#bcd5ec"/><stop offset="1" stop-color="#98bde2"/></radialGradient></defs><circle cx="7.5" cy="7.5" r="7.1" fill="url(#ig410_168)"/><rect x="6.6" y="6.4" width="2" height="4.6" fill="#3a64a8"/><rect x="6.6" y="3.2" width="2" height="1.8" fill="#3a64a8"/></svg>
<div class="ct" style="left:512px;top:169px;color:#000">6</div>
<div class="ct" style="left:544px;top:169px;color:#000">T419976</div>
<div class="ct" style="left:638px;top:169px;color:#000">1</div>
<div class="ct" style="left:674px;top:169px;color:#000">T419976</div>
<div class="ct up" style="left:762px;top:169px;color:#000">TEMPERATURE SENSOR</div>
<div class="row" style="top:186px;background:#ffffff;"></div>
<div class="hl" style="top:205px;"></div>
<svg class="ic" style="left:375px;top:189px" width="12" height="12" viewBox="0 0 12 12"><circle cx="6" cy="6" r="1.6" fill="#eaffd0"/><path d="M5.50 0.92 L6.50 0.92 L7.16 2.17 L7.89 2.47 L9.24 2.06 L9.94 2.76 L9.53 4.11 L9.83 4.84 L11.08 5.50 L11.08 6.50 L9.83 7.16 L9.53 7.89 L9.94 9.24 L9.24 9.94 L7.89 9.53 L7.16 9.83 L6.50 11.08 L5.50 11.08 L4.84 9.83 L4.11 9.53 L2.76 9.94 L2.06 9.24 L2.47 7.89 L2.17 7.16 L0.92 6.50 L0.92 5.50 L2.17 4.84 L2.47 4.11 L2.06 2.76 L2.76 2.06 L4.11 2.47 L4.84 2.17ZM7.40 6.00A1.4 1.4 0 1 0 4.60 6.00A1.4 1.4 0 1 0 7.40 6.00Z" fill="#79ad2b" fill-rule="evenodd"/></svg>
<svg class="ic" style="left:391px;top:188px" width="17" height="14" viewBox="0 0 17 14"><path d="M0.6 0.6l2.3 1.6" stroke="#4870a8" stroke-width="1.3"/><path d="M2.8 2.1h13.4l-2.6 5.6h-9.8z" fill="#4870a8"/><rect x="4.30" y="3.2" width="1.1" height="1.1" fill="#fff" opacity="0.85"/><rect x="4.30" y="5.3" width="1.1" height="1.1" fill="#fff" opacity="0.85"/><rect x="6.35" y="3.2" width="1.1" height="1.1" fill="#fff" opacity="0.85"/><rect x="6.35" y="5.3" width="1.1" height="1.1" fill="#fff" opacity="0.85"/><rect x="8.40" y="3.2" width="1.1" height="1.1" fill="#fff" opacity="0.85"/><rect x="8.40" y="5.3" width="1.1" height="1.1" fill="#fff" opacity="0.85"/><rect x="10.45" y="3.2" width="1.1" height="1.1" fill="#fff" opacity="0.85"/><rect x="10.45" y="5.3" width="1.1" height="1.1" fill="#fff" opacity="0.85"/><rect x="12.50" y="3.2" width="1.1" height="1.1" fill="#fff" opacity="0.85"/><rect x="12.50" y="5.3" width="1.1" height="1.1" fill="#fff" opacity="0.85"/><path d="M4 7.5v3M3.6 10.6h11.3" stroke="#4870a8" stroke-width="1.2"/><circle cx="4.8" cy="12.1" r="1.1" fill="#3f7fcc"/><circle cx="13" cy="12.1" r="1.1" fill="#3f7fcc"/></svg>
<svg class="ic" style="left:410px;top:188px" width="15" height="15" viewBox="0 0 15 15"><defs><radialGradient id="ig410_188" cx="0.42" cy="0.45" r="0.62"><stop offset="0" stop-color="#f8fbfe"/><stop offset="0.5" stop-color="#dfeaf6"/><stop offset="0.85" stop-color="#bcd5ec"/><stop offset="1" stop-color="#98bde2"/></radialGradient></defs><circle cx="7.5" cy="7.5" r="7.1" fill="url(#ig410_188)"/><rect x="6.6" y="6.4" width="2" height="4.6" fill="#3a64a8"/><rect x="6.6" y="3.2" width="2" height="1.8" fill="#3a64a8"/></svg>
<div class="ct" style="left:512px;top:189px;color:#000">7</div>
<div class="ct" style="left:544px;top:189px;color:#000">T401231</div>
<div class="ct" style="left:638px;top:189px;color:#000">1</div>
<div class="ct" style="left:674px;top:189px;color:#000">T401231</div>
<div class="ct up" style="left:762px;top:189px;color:#000">TEMPERATURE SENSOR</div>
<div class="row" style="top:206px;background:#ffffff;"></div>
<div class="hl" style="top:225px;"></div>
<svg class="ic" style="left:375px;top:209px" width="12" height="12" viewBox="0 0 12 12"><circle cx="6" cy="6" r="1.6" fill="#eaffd0"/><path d="M5.50 0.92 L6.50 0.92 L7.16 2.17 L7.89 2.47 L9.24 2.06 L9.94 2.76 L9.53 4.11 L9.83 4.84 L11.08 5.50 L11.08 6.50 L9.83 7.16 L9.53 7.89 L9.94 9.24 L9.24 9.94 L7.89 9.53 L7.16 9.83 L6.50 11.08 L5.50 11.08 L4.84 9.83 L4.11 9.53 L2.76 9.94 L2.06 9.24 L2.47 7.89 L2.17 7.16 L0.92 6.50 L0.92 5.50 L2.17 4.84 L2.47 4.11 L2.06 2.76 L2.76 2.06 L4.11 2.47 L4.84 2.17ZM7.40 6.00A1.4 1.4 0 1 0 4.60 6.00A1.4 1.4 0 1 0 7.40 6.00Z" fill="#79ad2b" fill-rule="evenodd"/></svg>
<svg class="ic" style="left:391px;top:208px" width="17" height="14" viewBox="0 0 17 14"><path d="M0.6 0.6l2.3 1.6" stroke="#4870a8" stroke-width="1.3"/><path d="M2.8 2.1h13.4l-2.6 5.6h-9.8z" fill="#4870a8"/><rect x="4.30" y="3.2" width="1.1" height="1.1" fill="#fff" opacity="0.85"/><rect x="4.30" y="5.3" width="1.1" height="1.1" fill="#fff" opacity="0.85"/><rect x="6.35" y="3.2" width="1.1" height="1.1" fill="#fff" opacity="0.85"/><rect x="6.35" y="5.3" width="1.1" height="1.1" fill="#fff" opacity="0.85"/><rect x="8.40" y="3.2" width="1.1" height="1.1" fill="#fff" opacity="0.85"/><rect x="8.40" y="5.3" width="1.1" height="1.1" fill="#fff" opacity="0.85"/><rect x="10.45" y="3.2" width="1.1" height="1.1" fill="#fff" opacity="0.85"/><rect x="10.45" y="5.3" width="1.1" height="1.1" fill="#fff" opacity="0.85"/><rect x="12.50" y="3.2" width="1.1" height="1.1" fill="#fff" opacity="0.85"/><rect x="12.50" y="5.3" width="1.1" height="1.1" fill="#fff" opacity="0.85"/><path d="M4 7.5v3M3.6 10.6h11.3" stroke="#4870a8" stroke-width="1.2"/><circle cx="4.8" cy="12.1" r="1.1" fill="#3f7fcc"/><circle cx="13" cy="12.1" r="1.1" fill="#3f7fcc"/></svg>
<svg class="ic" style="left:410px;top:208px" width="15" height="15" viewBox="0 0 15 15"><defs><radialGradient id="sg410_208" cx="0.42" cy="0.45" r="0.62"><stop offset="0" stop-color="#f8fbfe"/><stop offset="0.5" stop-color="#dfeaf6"/><stop offset="0.85" stop-color="#bcd5ec"/><stop offset="1" stop-color="#98bde2"/></radialGradient></defs><circle cx="7.5" cy="7.5" r="7.1" fill="url(#sg410_208)"/><text x="7.4" y="11.3" text-anchor="middle" font-family="Liberation Sans" font-weight="bold" font-size="10.5" fill="#0e5a96">S</text></svg>
<svg class="ic" style="left:428px;top:208px" width="15" height="15" viewBox="0 0 15 15"><defs><radialGradient id="ig428_208" cx="0.42" cy="0.45" r="0.62"><stop offset="0" stop-color="#f8fbfe"/><stop offset="0.5" stop-color="#dfeaf6"/><stop offset="0.85" stop-color="#bcd5ec"/><stop offset="1" stop-color="#98bde2"/></radialGradient></defs><circle cx="7.5" cy="7.5" r="7.1" fill="url(#ig428_208)"/><rect x="6.6" y="6.4" width="2" height="4.6" fill="#3a64a8"/><rect x="6.6" y="3.2" width="2" height="1.8" fill="#3a64a8"/></svg>
<svg class="ic" style="left:452px;top:207px" width="17" height="15" viewBox="0 0 17 15"><path d="M1 2.6v10.6h14.6v-10.6" fill="#c8c8c8" stroke="#77735a" stroke-width="1"/><path d="M2.4 1.6h2.8M10.4 1.6h2.9" stroke="#8c8660" stroke-width="1.2"/><path d="M1.8 2.3c2 -0.8 4.1 -0.8 5.8 0.4c1.8 -1.2 4 -1.2 6.6 -0.4v10c-2.3 -0.6 -4.6 -0.4 -6.6 0.7c-1.9 -1.1 -3.9 -1.2 -5.8 -0.7z" fill="#f7f7f7" stroke="#9a9a9a" stroke-width="0.5"/><path d="M2.5 3.5v8.5" stroke="#d0d0d0" stroke-width="1"/><path d="M1.6 12.6c2 -0.6 4.1 -0.4 6 0.8c2 -1.1 4.5 -1.2 6.8 -0.7" fill="none" stroke="#6a6a6a" stroke-width="0.9"/><ellipse cx="8.3" cy="7.3" rx="3.3" ry="4.1" fill="#fcfcfc" stroke="#3c3c3c" stroke-width="0.9"/><path d="M10.8 10.3l3.8 4.2" stroke="#2a2a2a" stroke-width="1.5"/></svg>
<div class="ct" style="left:512px;top:209px;color:#000">7</div>
<div class="ct" style="left:544px;top:209px;color:#000">T413978</div>
<div class="ct" style="left:638px;top:209px;color:#000">1</div>
<div class="ct" style="left:674px;top:209px;color:#000">T413978</div>
<div class="ct up" style="left:762px;top:209px;color:#000">TEMPERATURE SENSOR</div>
<div class="row" style="top:226px;background:#ffffff;"></div>
<div class="hl" style="top:245px;"></div>
<svg class="ic" style="left:375px;top:229px" width="12" height="12" viewBox="0 0 12 12"><circle cx="6" cy="6" r="1.6" fill="#eaffd0"/><path d="M5.50 0.92 L6.50 0.92 L7.16 2.17 L7.89 2.47 L9.24 2.06 L9.94 2.76 L9.53 4.11 L9.83 4.84 L11.08 5.50 L11.08 6.50 L9.83 7.16 L9.53 7.89 L9.94 9.24 L9.24 9.94 L7.89 9.53 L7.16 9.83 L6.50 11.08 L5.50 11.08 L4.84 9.83 L4.11 9.53 L2.76 9.94 L2.06 9.24 L2.47 7.89 L2.17 7.16 L0.92 6.50 L0.92 5.50 L2.17 4.84 L2.47 4.11 L2.06 2.76 L2.76 2.06 L4.11 2.47 L4.84 2.17ZM7.40 6.00A1.4 1.4 0 1 0 4.60 6.00A1.4 1.4 0 1 0 7.40 6.00Z" fill="#79ad2b" fill-rule="evenodd"/></svg>
<svg class="ic" style="left:391px;top:228px" width="17" height="14" viewBox="0 0 17 14"><path d="M0.6 0.6l2.3 1.6" stroke="#4870a8" stroke-width="1.3"/><path d="M2.8 2.1h13.4l-2.6 5.6h-9.8z" fill="#4870a8"/><rect x="4.30" y="3.2" width="1.1" height="1.1" fill="#fff" opacity="0.85"/><rect x="4.30" y="5.3" width="1.1" height="1.1" fill="#fff" opacity="0.85"/><rect x="6.35" y="3.2" width="1.1" height="1.1" fill="#fff" opacity="0.85"/><rect x="6.35" y="5.3" width="1.1" height="1.1" fill="#fff" opacity="0.85"/><rect x="8.40" y="3.2" width="1.1" height="1.1" fill="#fff" opacity="0.85"/><rect x="8.40" y="5.3" width="1.1" height="1.1" fill="#fff" opacity="0.85"/><rect x="10.45" y="3.2" width="1.1" height="1.1" fill="#fff" opacity="0.85"/><rect x="10.45" y="5.3" width="1.1" height="1.1" fill="#fff" opacity="0.85"/><rect x="12.50" y="3.2" width="1.1" height="1.1" fill="#fff" opacity="0.85"/><rect x="12.50" y="5.3" width="1.1" height="1.1" fill="#fff" opacity="0.85"/><path d="M4 7.5v3M3.6 10.6h11.3" stroke="#4870a8" stroke-width="1.2"/><circle cx="4.8" cy="12.1" r="1.1" fill="#3f7fcc"/><circle cx="13" cy="12.1" r="1.1" fill="#3f7fcc"/></svg>
<svg class="ic" style="left:410px;top:228px" width="15" height="15" viewBox="0 0 15 15"><defs><radialGradient id="ig410_228" cx="0.42" cy="0.45" r="0.62"><stop offset="0" stop-color="#f8fbfe"/><stop offset="0.5" stop-color="#dfeaf6"/><stop offset="0.85" stop-color="#bcd5ec"/><stop offset="1" stop-color="#98bde2"/></radialGradient></defs><circle cx="7.5" cy="7.5" r="7.1" fill="url(#ig410_228)"/><rect x="6.6" y="6.4" width="2" height="4.6" fill="#3a64a8"/><rect x="6.6" y="3.2" width="2" height="1.8" fill="#3a64a8"/></svg>
<div class="ct" style="left:512px;top:229px;color:#000">8</div>
<div class="ct" style="left:544px;top:229px;color:#000">T413996</div>
<div class="ct" style="left:638px;top:229px;color:#000">1</div>
<div class="ct" style="left:674px;top:229px;color:#000">T413996</div>
<div class="ct up" style="left:762px;top:229px;color:#000">SENSOR</div>
<div class="vl" style="left:449px;top:46px;height:200px;"></div>
<div class="vl" style="left:507px;top:46px;height:200px;"></div>
<div class="vl" style="left:540px;top:46px;height:200px;"></div>
<div class="vl" style="left:634px;top:46px;height:200px;"></div>
<div class="vl" style="left:670px;top:46px;height:200px;"></div>
<div class="vl" style="left:758px;top:46px;height:200px;"></div>
<div class="vl" style="left:924px;top:46px;height:200px;"></div>
<div class="vl" style="left:984px;top:46px;height:200px;"></div>
<div class="vl" style="left:1044px;top:46px;height:200px;"></div>
<svg class="ic" style="left:0;top:0" width="365" height="738" viewBox="0 0 365 738" stroke-linecap="round" stroke-linejoin="round">
<path d="M174.5 266.2 L272.0 253.3" stroke="#151515" stroke-width="1.01" fill="none" />
<path d="M174.5 268.9 L272.0 258.2" stroke="#151515" stroke-width="1.01" fill="none" />
<path d="M272.0 253.0 L281.0 252.2 L302.0 249.2 L302.0 256.8 L281.0 257.6 L272.0 258.3Z" stroke="#151515" stroke-width="1.01" fill="#fff" />
<path d="M281.0 252.2 L281.0 257.6" stroke="#151515" stroke-width="0.90" fill="none" />
<path d="M286.4 251.5 L286.4 257.3" stroke="#151515" stroke-width="0.90" fill="none" />
<path d="M292.4 250.7 L292.4 257.1" stroke="#777" stroke-width="0.67" fill="none" />
<path d="M302.0 247.6 L306.4 247.3 L306.4 257.4 L302.0 257.6Z" stroke="#151515" stroke-width="1.01" fill="#fff" />
<path d="M306.4 248.2C307.3 248.2 310.3 248.0 312.0 248.2C313.7 248.4 315.5 249.0 316.5 249.5C317.5 250.0 317.8 250.6 317.8 251.3C317.8 252.0 317.5 253.1 316.5 253.6C315.5 254.1 313.7 254.3 312.0 254.5C310.3 254.7 307.3 254.8 306.4 254.8" stroke="#151515" stroke-width="1.01" fill="#fff" />
<path d="M309.5 248.4 L309.5 254.6" stroke="#777" stroke-width="0.67" fill="none" />
<path d="M156.2 265.1C154.5 265.2 148.0 264.8 146.2 265.6C144.4 266.4 145.0 268.5 145.2 270.0C145.4 271.5 145.8 274.1 147.6 274.8C149.4 275.5 154.8 274.4 156.2 274.3" stroke="#151515" stroke-width="1.01" fill="#fff" />
<path d="M146.5 270.2 L156.0 269.8" stroke="#888" stroke-width="0.67" fill="none" />
<path d="M154.6 262.1 L158.9 262.1 L158.9 275.9 L154.6 275.9Z" stroke="#151515" stroke-width="1.12" fill="#555" />
<path d="M158.9 262.3C160.2 262.1 164.5 261.2 166.4 261.3C168.3 261.4 169.4 262.1 170.2 263.2C171.0 264.3 171.4 266.4 171.0 268.0C170.6 269.6 169.6 272.1 168.0 273.0C166.4 273.9 163.1 273.5 161.6 273.7C160.1 273.9 159.3 273.9 158.9 274.0" stroke="#151515" stroke-width="1.01" fill="#fff" />
<path d="M170.0 263.4 L174.5 265.8 L174.5 269.4 L171.5 271.6" stroke="#151515" stroke-width="1.01" fill="#333" />
<path d="M163.0 268.5 L166.0 268.2" stroke="#777" stroke-width="0.67" fill="none" />
<path d="M93.1 305.3 L29.4 495.0" stroke="#151515" stroke-width="1.01" fill="none" />
<path d="M95.8 305.3 L33.8 488.9" stroke="#151515" stroke-width="1.01" fill="none" />
<path d="M29.4 495.0C29.6 495.4 29.9 496.8 30.5 497.3C31.1 497.8 31.3 497.9 33.0 497.8C34.7 497.8 39.3 497.1 40.6 497.0" stroke="#151515" stroke-width="1.01" fill="none" />
<path d="M36.0 472.0 L38.6 472.8" stroke="#151515" stroke-width="0.78" fill="none" />
<path d="M95.2 285.7 L91.4 302.6 L99.2 304.7 L104.6 287.7" stroke="#151515" stroke-width="1.01" fill="#fff" />
<path d="M91.4 302.6 L93.0 305.6 L99.0 306.5 L99.2 304.7" stroke="#151515" stroke-width="0.90" fill="#fff" />
<path d="M98.0 289.0 L96.5 296.0" stroke="#777" stroke-width="0.67" fill="none" />
<path d="M93.1 282.0 L109.4 285.0 L110.8 287.8 L94.0 285.0Z" stroke="#151515" stroke-width="0.90" fill="#fff" />
<path d="M94.5 283.3 L109.5 286.2" stroke="#333" stroke-width="1.12" fill="none" />
<path d="M102.0 287.5 L103.0 289.0 L104.5 288.0" stroke="#444" stroke-width="0.90" fill="none" />
<path d="M96.5 281.0C97.0 279.2 98.8 272.3 99.6 270.1C100.4 267.9 100.9 268.1 101.6 267.8C102.2 267.6 102.5 268.1 103.5 268.6C104.5 269.1 106.1 270.5 107.3 270.8C108.5 271.1 110.0 270.4 110.7 270.6C111.4 270.8 112.2 270.0 111.7 272.2C111.2 274.4 108.6 281.8 108.0 283.7" stroke="#151515" stroke-width="1.01" fill="#fff" />
<path d="M101.5 270.0C101.8 269.6 102.7 269.0 103.0 269.4C103.3 269.8 103.5 271.8 103.3 272.5C103.1 273.2 102.2 273.5 101.8 273.4C101.4 273.3 101.0 272.6 101.0 272.0C101.0 271.4 101.2 270.4 101.5 270.0Z" stroke="#151515" stroke-width="0.78" fill="none" />
<path d="M104.8 272.0 L102.0 282.0" stroke="#888" stroke-width="0.67" fill="none" />
<path d="M33.0 488.0 L40.5 485.5 L44.0 494.0 L37.0 498.5Z" stroke="#151515" stroke-width="1.01" fill="#aaa" />
<path d="M35.0 489.0 L41.0 494.5" stroke="#444" stroke-width="0.67" fill="none" />
<path d="M37.0 487.5 L42.5 492.0" stroke="#444" stroke-width="0.67" fill="none" />
<path d="M42.6 486.1 L53.4 479.7 L54.8 482.1 L45.3 490.2Z" stroke="#151515" stroke-width="1.01" fill="#fff" />
<path d="M47.5 483.5 L53.4 479.7 L54.8 482.1 L49.0 486.8Z" stroke="#151515" stroke-width="0.67" fill="#888" />
<path d="M54.8 480.5 L73.1 463.8" stroke="#333" stroke-width="0.67" fill="none" />
<path d="M83.9 486.8C82.9 485.4 79.5 482.7 77.8 478.7C76.1 474.7 74.7 467.8 73.7 463.0C72.8 458.2 73.2 454.7 72.1 450.0C71.0 445.3 68.1 439.1 67.3 435.0C66.5 430.9 66.8 429.4 67.3 425.5C67.8 421.6 68.6 415.6 70.2 411.3C71.8 407.0 74.1 403.1 76.8 399.9C79.5 396.7 83.3 393.9 86.3 392.3C89.3 390.7 92.3 390.2 94.8 390.0C97.3 389.8 98.7 389.9 101.5 390.9C104.3 391.9 108.0 393.7 111.9 396.1C115.8 398.6 121.2 401.8 125.0 405.6C128.8 409.4 131.8 414.7 134.5 418.8C137.2 422.9 139.2 426.0 141.0 430.0C142.8 434.0 144.4 438.5 145.5 443.0C146.6 447.5 147.5 453.1 147.8 456.8C148.2 460.5 147.9 462.5 147.6 465.0C147.3 467.5 147.1 469.3 145.9 472.0C144.7 474.7 143.3 478.9 140.2 481.4C137.0 483.9 132.4 485.5 127.0 487.0C121.6 488.5 113.3 489.8 108.0 490.5C102.7 491.2 97.2 490.9 95.0 491.0" stroke="#151515" stroke-width="1.12" fill="#fff" />
<path d="M91.0 393.3C93.3 394.1 99.6 394.8 105.0 398.0C110.4 401.2 120.2 409.9 123.3 412.3" stroke="#777" stroke-width="0.78" fill="none" />
<path d="M144.0 441.0C144.2 443.3 145.2 450.7 145.0 455.0C144.8 459.3 143.3 465.0 143.0 467.0" stroke="#888" stroke-width="0.67" fill="none" stroke-dasharray="4 3"/>
<path d="M114.0 480.5 L126.0 478.5" stroke="#888" stroke-width="0.67" fill="none" />
<path d="M127.0 479.5 L138.0 477.5" stroke="#888" stroke-width="0.67" fill="none" />
<path d="M83.5 488.0C83.1 489.0 81.4 492.2 81.2 494.2C81.0 496.2 80.8 498.1 82.1 499.9C83.4 501.7 86.4 504.0 89.2 505.1C92.0 506.2 95.5 506.6 98.7 506.6C101.9 506.6 105.4 506.2 108.2 505.1C111.0 504.0 113.9 501.7 115.3 499.9C116.7 498.1 116.8 495.8 116.7 494.2C116.6 492.6 115.1 491.0 114.8 490.4" stroke="#151515" stroke-width="1.01" fill="#fff" />
<path d="M84.0 488.5C84.9 489.4 86.8 492.8 89.2 494.2C91.7 495.6 95.5 496.5 98.7 496.6C101.9 496.7 105.7 495.9 108.2 494.7C110.7 493.5 113.0 490.4 113.9 489.5" stroke="#151515" stroke-width="1.01" fill="none" />
<path d="M84.0 492.3C84.9 493.2 86.8 496.3 89.2 497.6C91.7 498.9 95.5 499.9 98.7 500.0C101.9 500.1 105.5 499.5 108.2 498.0C110.9 496.5 113.7 492.1 114.8 490.9" stroke="#151515" stroke-width="1.01" fill="none" />
<path d="M84.5 487.6C86.5 488.2 91.5 491.1 96.3 491.4C101.0 491.7 108.2 490.4 113.0 489.5C117.8 488.6 123.0 486.8 125.0 486.2" stroke="#151515" stroke-width="1.01" fill="none" />
<path d="M86.0 503.5C87.0 503.9 89.8 505.4 92.0 505.8C94.2 506.2 96.7 506.2 99.0 506.2C101.3 506.2 103.8 506.1 106.0 505.6C108.2 505.1 111.0 503.4 112.0 503.0" stroke="#999" stroke-width="0.67" fill="none" />
<path d="M101.5 390.9 L123.0 378.5" stroke="#151515" stroke-width="1.01" fill="none" />
<path d="M156.0 358.3 L204.0 329.8" stroke="#151515" stroke-width="1.01" fill="none" />
<path d="M147.0 470.0 L178.6 455.5" stroke="#151515" stroke-width="1.01" fill="none" />
<path d="M210.1 433.3 L250.0 411.6" stroke="#151515" stroke-width="1.01" fill="none" />
<path d="M121.5 378.4C122.1 377.2 123.7 373.2 125.0 371.0C126.3 368.8 127.1 367.0 129.4 365.1C131.7 363.2 135.7 360.7 138.7 359.4C141.7 358.1 144.5 357.4 147.4 357.2C150.3 357.0 152.4 356.9 156.0 358.3C159.6 359.7 165.1 363.0 169.0 365.8C172.9 368.6 176.7 372.4 179.7 375.2C182.7 378.0 184.4 379.4 187.0 382.4C189.6 385.4 192.7 389.8 195.0 393.2C197.3 396.6 199.9 400.9 200.9 402.5" stroke="#151515" stroke-width="1.01" fill="none" />
<path d="M123.5 377.0C124.4 375.7 126.8 371.6 129.0 369.0C131.2 366.4 133.9 362.8 136.6 361.5C139.3 360.2 142.4 360.6 145.0 361.0C147.6 361.4 149.0 362.1 152.4 363.7C155.8 365.3 161.1 367.4 165.4 370.9C169.7 374.4 174.7 380.2 178.3 384.5C181.9 388.8 185.0 393.2 187.0 396.8C189.0 400.4 189.8 402.8 190.5 406.0C191.2 409.2 191.3 414.3 191.5 416.0" stroke="#151515" stroke-width="1.23" fill="none" />
<path d="M125.5 376.0C127.0 374.4 130.8 368.1 134.4 366.5C138.1 364.9 142.8 365.3 147.4 366.5C152.0 367.7 157.0 370.1 161.8 373.7C166.6 377.3 172.5 383.8 176.2 388.1C179.9 392.4 182.1 396.0 184.0 399.6C185.9 403.2 186.7 406.6 187.5 410.0C188.3 413.4 188.7 416.3 189.0 420.0C189.3 423.7 189.7 428.7 189.5 432.0C189.3 435.3 188.2 438.7 188.0 440.0" stroke="#151515" stroke-width="0.90" fill="none" />
<path d="M179.7 386.0 L186.2 381.7" stroke="#151515" stroke-width="0.78" fill="none" />
<path d="M125.0 376.5C126.0 375.2 129.0 370.7 131.0 368.5C133.0 366.3 134.7 364.4 137.0 363.5C139.3 362.6 142.4 362.6 145.0 363.0C147.6 363.4 149.1 364.0 152.4 365.7C155.7 367.4 160.8 369.5 165.0 373.0C169.2 376.5 174.0 382.2 177.5 386.5C181.0 390.8 184.0 395.4 186.0 399.0C188.0 402.6 188.9 406.5 189.5 408.0" stroke="#555" stroke-width="0.62" fill="none" />
<path d="M168.0 459.0C169.0 458.8 172.3 458.1 174.0 457.5C175.7 456.9 176.5 456.4 178.0 455.5C179.5 454.6 182.2 452.6 183.0 452.0" stroke="#151515" stroke-width="0.90" fill="none" />
<path d="M169.0 460.5C170.2 460.3 173.8 460.2 176.0 459.5C178.2 458.8 181.0 456.6 182.0 456.0" stroke="#666" stroke-width="0.67" fill="none" />
<rect x="-8.5" y="-3.3" width="17" height="6.6" rx="3" transform="translate(195.2 402) rotate(55)" stroke="#1e1e1e" stroke-width="0.9" fill="#fff"/>
<rect x="-5" y="-1.3" width="10" height="2.6" rx="1.3" transform="translate(195.2 402) rotate(55)" stroke="#1e1e1e" stroke-width="0.8" fill="#fff"/>
<path d="M190.0 413.0 L196.5 410.0 L204.3 409.3" stroke="#151515" stroke-width="0.90" fill="none" />
<path d="M197.5 410.6 L204.3 409.3 L209.7 437.8 L204.3 440.5Z" stroke="#151515" stroke-width="1.01" fill="#fff" />
<path d="M190.0 413.0 L197.5 439.0" stroke="#151515" stroke-width="0.90" fill="none" />
<path d="M193.0 412.0 L200.0 438.0" stroke="#666" stroke-width="0.67" fill="none" />
<path d="M194.5 414.5C194.8 413.8 196.4 413.7 197.0 414.2C197.6 414.7 198.1 416.8 197.8 417.5C197.5 418.2 195.8 418.8 195.2 418.3C194.6 417.8 194.2 415.2 194.5 414.5Z" stroke="#151515" stroke-width="1.01" fill="#333" />
<path d="M201.0 411.5C201.2 410.7 202.8 410.1 203.5 410.5C204.2 410.9 205.2 413.2 205.0 414.0C204.8 414.8 203.2 415.9 202.5 415.5C201.8 415.1 200.8 412.3 201.0 411.5Z" stroke="#151515" stroke-width="0.78" fill="none" />
<path d="M187.5 418.0 L189.5 438.0" stroke="#151515" stroke-width="0.78" fill="none" />
<rect x="-5" y="-4.2" width="10" height="8.4" rx="2.5" transform="translate(191.2 445) rotate(40)" stroke="#1e1e1e" stroke-width="0.9" fill="#fff"/>
<ellipse cx="0" cy="0" rx="1.8" ry="4" transform="translate(187.8 441.8) rotate(40)" stroke="#1e1e1e" stroke-width="0.7" fill="#fff"/>
<rect x="-3.2" y="-3.6" width="6.4" height="7.2" rx="1.2" transform="translate(185.2 455.6) rotate(40)" stroke="#1e1e1e" stroke-width="0.9" fill="#fff"/>
<path d="M183.0 453.5 L187.5 458.0" stroke="#555" stroke-width="0.67" fill="none" />
<path d="M196.1 449.6 L269.0 510.0" stroke="#333" stroke-width="0.67" fill="none" stroke-dasharray="9 3 2 3"/>
<path d="M203.7 330.5C204.4 328.8 206.0 323.1 208.1 320.3C210.2 317.5 212.5 315.7 216.3 313.8C220.1 311.9 226.6 309.9 230.9 308.9C235.2 307.9 238.2 307.5 242.3 307.7C246.4 307.9 251.2 308.7 255.3 309.8C259.4 310.9 263.2 312.2 266.9 314.5C270.6 316.8 274.2 320.2 277.4 323.4C280.6 326.6 283.6 330.7 286.3 333.9C289.0 337.1 291.1 340.6 293.8 342.8C296.5 345.0 300.5 345.8 302.7 347.3C304.9 348.8 306.4 350.6 307.2 351.8C307.9 353.0 307.2 354.2 307.2 354.7" stroke="#151515" stroke-width="1.01" fill="none" />
<path d="M218.7 314.6C221.0 313.9 227.5 310.9 232.5 310.6C237.5 310.3 243.4 311.1 248.8 313.0C254.2 314.9 261.0 318.8 265.0 322.0C269.0 325.2 271.7 330.3 273.0 332.0" stroke="#151515" stroke-width="0.78" fill="none" />
<path d="M205.5 329.0C206.6 327.5 208.8 322.4 212.0 320.0C215.2 317.6 220.3 315.1 224.4 314.6C228.5 314.1 232.3 315.2 236.6 317.0C240.9 318.8 246.2 321.9 250.4 325.2C254.6 328.5 258.7 332.7 261.8 336.6C264.9 340.5 267.2 344.9 269.1 348.8C271.0 352.7 272.1 355.3 273.2 360.0C274.2 364.7 275.0 371.7 275.4 377.0C275.8 382.3 276.1 387.9 275.4 392.0C274.7 396.1 273.4 398.7 271.3 401.6C269.2 404.5 266.4 407.8 263.0 409.5C259.6 411.2 253.0 411.6 251.0 412.0" stroke="#151515" stroke-width="1.12" fill="none" />
<path d="M208.0 327.0C210.1 325.7 216.2 320.2 220.3 319.1C224.4 318.0 227.8 318.5 232.5 320.3C237.2 322.1 244.1 326.3 248.8 330.1C253.6 333.9 257.6 338.1 261.0 343.1C264.4 348.1 267.4 354.4 269.1 360.0C270.8 365.6 270.8 371.7 271.0 377.0C271.2 382.3 271.3 387.7 270.5 392.0C269.7 396.3 268.6 400.0 266.0 403.0C263.4 406.0 256.8 408.8 255.0 410.0" stroke="#151515" stroke-width="0.90" fill="none" />
<path d="M209.8 324.4C211.6 323.9 216.5 321.8 220.3 321.6C224.1 321.4 228.2 321.6 232.5 323.2C236.8 324.8 242.0 327.7 246.3 331.4C250.6 335.1 255.1 340.7 258.5 345.5C261.9 350.3 265.1 354.7 266.7 360.0C268.3 365.3 268.1 371.8 268.4 377.1C268.7 382.4 269.1 387.5 268.4 392.0C267.7 396.5 264.7 402.0 264.0 404.0" stroke="#151515" stroke-width="0.67" fill="none" />
<path d="M261.0 338.2 L266.7 335.0" stroke="#151515" stroke-width="0.78" fill="none" />
<path d="M272.9 327.9C274.1 329.6 277.8 334.3 280.0 338.0C282.2 341.7 284.5 347.8 286.3 350.3C288.1 352.8 288.1 353.2 290.8 353.2C293.5 353.2 300.7 350.8 302.7 350.3" stroke="#151515" stroke-width="0.78" fill="none" />
<path d="M276.0 332.0C277.0 334.0 281.0 342.0 282.0 344.0" stroke="#777" stroke-width="0.67" fill="none" />
<path d="M284.8 360.7C286.5 359.8 291.5 355.8 295.0 355.0C298.5 354.2 303.9 356.0 305.7 356.2" stroke="#151515" stroke-width="0.90" fill="none" />
<path d="M275.0 395.0C276.2 394.5 279.1 393.7 282.0 392.0C284.9 390.3 290.6 385.8 292.3 384.6" stroke="#151515" stroke-width="0.78" fill="none" />
<path d="M305.7 356.2 L328.1 368.2" stroke="#151515" stroke-width="1.01" fill="none" />
<path d="M292.3 384.6 L317.6 397.2" stroke="#151515" stroke-width="1.01" fill="none" />
<ellipse cx="322.8" cy="383" rx="9.6" ry="15" transform="rotate(22 322.8 383)" stroke="#1e1e1e" stroke-width="0.9" fill="#fff"/>
<path d="M268.0 349.0 L274.0 345.5 L283.5 357.5 L278.7 361.0" stroke="#151515" stroke-width="0.90" fill="none" />
<path d="M260.7 338.5 L267.3 333.8" stroke="#151515" stroke-width="0.78" fill="none" />
<rect x="-8.3" y="-3.2" width="16.6" height="6.4" rx="3" transform="translate(275.4 354.2) rotate(60)" stroke="#1e1e1e" stroke-width="0.9" fill="#fff"/>
<rect x="-5" y="-1.3" width="10" height="2.6" rx="1.3" transform="translate(275.4 354.2) rotate(60)" stroke="#1e1e1e" stroke-width="0.8" fill="#fff"/>
<path d="M278.7 358.5 L283.5 357.5 L292.0 390.7 L286.3 392.6Z" stroke="#151515" stroke-width="1.01" fill="#fff" />
<path d="M272.5 362.0 L279.5 360.0 L286.3 392.6" stroke="#151515" stroke-width="0.90" fill="none" />
<path d="M269.5 364.0 L276.0 393.0" stroke="#666" stroke-width="0.67" fill="none" />
<path d="M274.5 368.5C274.7 367.6 276.3 367.3 277.0 368.0C277.7 368.7 278.7 371.6 278.5 372.5C278.3 373.4 276.7 374.2 276.0 373.5C275.3 372.8 274.3 369.4 274.5 368.5Z" stroke="#151515" stroke-width="1.01" fill="#333" />
<path d="M282.5 365.5C282.7 364.4 284.8 364.2 285.5 365.0C286.2 365.8 287.2 368.9 287.0 370.0C286.8 371.1 285.2 372.2 284.5 371.5C283.8 370.8 282.3 366.6 282.5 365.5Z" stroke="#151515" stroke-width="0.78" fill="none" />
<path d="M276.0 386.0 L285.5 384.0" stroke="#151515" stroke-width="0.67" fill="none" />
<path d="M283.0 392.0 L293.0 385.0" stroke="#151515" stroke-width="0.67" fill="none" />
<path d="M330.0 424.5 L304.5 517.0" stroke="#151515" stroke-width="1.01" fill="none" />
<path d="M332.5 424.5 L307.2 517.5" stroke="#151515" stroke-width="1.01" fill="none" />
<path d="M304.5 517.0C304.2 518.9 303.6 525.6 303.0 528.2C302.4 530.8 301.8 532.1 300.8 532.5C299.8 532.9 297.6 530.8 297.0 530.4" stroke="#151515" stroke-width="1.01" fill="none" />
<path d="M307.2 517.5C307.0 519.3 306.9 525.3 306.2 528.2C305.5 531.1 304.1 533.4 303.0 534.7C301.9 536.0 301.1 536.2 299.7 535.8C298.2 535.4 295.2 533.0 294.3 532.5" stroke="#151515" stroke-width="1.01" fill="none" />
<path d="M303.8 518.0 L307.8 518.5" stroke="#151515" stroke-width="0.78" fill="none" />
<path d="M331.5 402.6 L333.2 399.9 L340.7 403.1 L339.7 410.2 L330.5 408.0Z" stroke="#151515" stroke-width="1.01" fill="#fff" />
<path d="M336.0 401.5 L335.0 408.5" stroke="#888" stroke-width="0.67" fill="none" />
<path d="M328.3 409.1 L339.7 412.3 L335.9 415.0 L329.0 413.0Z" stroke="#151515" stroke-width="1.12" fill="#444" />
<path d="M329.4 412.3 L328.3 422.1 L333.7 423.2 L335.9 415.0" stroke="#151515" stroke-width="1.01" fill="#fff" />
<path d="M328.3 422.1 L328.3 425.3 L333.2 425.8 L333.7 423.2" stroke="#151515" stroke-width="0.90" fill="#fff" />
<path d="M331.0 416.0 L330.3 420.0" stroke="#777" stroke-width="0.67" fill="none" />
<path d="M270.4 509.2 L287.8 523.3" stroke="#151515" stroke-width="1.01" fill="none" />
<path d="M268.8 512.5 L286.1 526.0" stroke="#151515" stroke-width="1.01" fill="none" />
<path d="M268.8 512.5C268.8 512.2 268.3 511.1 268.6 510.5C268.9 509.9 270.1 509.4 270.4 509.2" stroke="#151515" stroke-width="1.01" fill="none" />
<path d="M269.3 509.6 L272.8 512.4 L271.5 514.2 L268.9 512.0Z" stroke="#151515" stroke-width="0.78" fill="#777" />
<rect x="-4" y="-3.6" width="8" height="7.2" rx="1" transform="translate(290.2 527.1) rotate(40)" stroke="#151515" stroke-width="1" fill="#bbb"/>
<path d="M288.0 524.5 L292.5 529.5" stroke="#444" stroke-width="0.67" fill="none" />
<path d="M289.5 523.8 L294.0 528.6" stroke="#444" stroke-width="0.67" fill="none" />
<ellipse cx="0" cy="0" rx="2.2" ry="4.6" transform="translate(294.5 531) rotate(45)" stroke="#151515" stroke-width="1" fill="#fff"/>
<path d="M128.7 557.5C128.6 560.2 127.2 568.4 127.9 573.8C128.6 579.2 130.4 585.0 132.8 590.1C135.2 595.2 138.7 600.1 142.5 604.7C146.3 609.3 151.0 614.5 155.6 617.8C160.2 621.1 165.6 623.1 170.0 624.4C174.4 625.7 178.6 626.3 182.2 625.7C185.8 625.1 190.1 621.8 191.7 621.0" stroke="#151515" stroke-width="1.01" fill="none" />
<path d="M130.5 558.0C130.4 560.6 129.1 568.5 129.8 573.8C130.5 579.1 132.1 585.0 134.5 590.0C136.9 595.0 140.2 599.6 144.0 604.0C147.8 608.4 152.6 613.4 157.0 616.5C161.4 619.6 166.3 621.5 170.5 622.8C174.7 624.0 178.7 624.5 182.0 624.0C185.3 623.5 189.1 620.7 190.5 620.0" stroke="#666" stroke-width="0.67" fill="none" />
<path d="M144.2 562.4C144.7 565.1 145.5 573.6 147.4 578.7C149.3 583.9 152.1 589.0 155.6 593.3C159.1 597.6 163.6 601.2 168.6 604.7C173.6 608.2 180.8 612.6 185.6 614.2C190.3 615.8 195.2 614.2 197.1 614.2" stroke="#151515" stroke-width="1.01" fill="none" />
<path d="M128.7 557.5C129.1 556.4 130.8 552.1 131.2 551.0" stroke="#151515" stroke-width="1.01" fill="none" />
<path d="M131.2 551.0 L121.4 540.5 L136.0 529.1 L147.4 541.3 L145.0 551.0 L144.2 562.4" stroke="#151515" stroke-width="1.01" fill="none" />
<path d="M121.4 541.8 L131.5 552.5" stroke="#666" stroke-width="0.67" fill="none" />
<ellipse cx="135.3" cy="540.4" rx="1.6" ry="1.2" transform="rotate(-20 135.3 540.4)" stroke="#1e1e1e" stroke-width="0.9" fill="#fff"/>
<path d="M197.1 614.2 L205.2 609.5 L207.9 609.8 L217.4 619.6 L216.7 622.3 L202.5 631.1 L199.8 629.8 L191.7 621.0" stroke="#151515" stroke-width="1.01" fill="none" />
<ellipse cx="204.4" cy="619.7" rx="1.7" ry="1.2" transform="rotate(-20 204.4 619.7)" stroke="#1e1e1e" stroke-width="0.9" fill="#fff"/>
<path d="M191.7 621.0 L200.5 648.7" stroke="#151515" stroke-width="1.01" fill="none" />
<path d="M193.5 622.5 L201.8 647.5" stroke="#777" stroke-width="0.56" fill="none" />
<path d="M209.3 629.1 L212.0 640.6 L200.5 648.7" stroke="#151515" stroke-width="1.01" fill="none" />
<path d="M198.4 635.2 L210.6 641.3" stroke="#151515" stroke-width="0.67" fill="none" />
<path d="M134.4 595.0 L127.1 609.6 L131.2 614.5 L200.5 648.7" stroke="#151515" stroke-width="1.01" fill="none" />
<path d="M164.3 512.9C165.6 512.1 169.3 509.5 172.0 508.0C174.7 506.5 178.5 504.2 180.7 503.7C182.9 503.1 183.7 503.8 185.2 504.7C186.7 505.6 186.4 506.4 189.6 509.2C192.8 512.0 200.0 517.4 204.5 521.8C209.0 526.1 213.0 530.8 216.5 535.3C220.0 539.8 223.3 545.0 225.4 548.7C227.5 552.4 228.8 554.6 229.1 557.6C229.3 560.6 227.8 564.1 226.9 566.6C226.0 569.1 224.5 570.0 223.9 572.5C223.3 575.0 223.3 580.0 223.2 581.5" stroke="#151515" stroke-width="1.01" fill="none" />
<path d="M167.3 514.4C167.8 514.3 168.5 513.0 170.2 513.7C171.9 514.5 174.5 516.5 177.7 518.9C180.9 521.2 185.6 524.1 189.6 527.8C193.6 531.5 198.0 536.7 201.5 541.2C205.0 545.7 208.0 550.6 210.5 554.6C213.0 558.6 215.8 561.9 216.5 565.1C217.2 568.3 215.8 570.8 215.0 574.0C214.2 577.2 212.8 582.1 212.0 584.5C211.2 586.9 210.3 587.6 210.0 588.2" stroke="#151515" stroke-width="1.23" fill="none" />
<path d="M138.2 512.2 L152.4 503.7 L163.5 514.5 L150.9 523.3Z" stroke="#151515" stroke-width="1.01" fill="#fff" />
<path d="M139.5 514.5 L150.6 525.2 L164.8 516.0" stroke="#151515" stroke-width="0.90" fill="none" />
<path d="M145.0 518.5 L159.0 518.5" stroke="#999" stroke-width="0.56" fill="none" />
<path d="M147.0 520.5 L157.0 520.0" stroke="#999" stroke-width="0.56" fill="none" />
<ellipse cx="150.9" cy="512" rx="1.5" ry="3" transform="rotate(-25 150.9 512)" stroke="#1e1e1e" stroke-width="0.8" fill="#fff"/>
<path d="M209.7 588.2 L220.9 580.7 L232.8 594.9 L219.4 604.6Z" stroke="#151515" stroke-width="1.01" fill="#fff" />
<path d="M211.0 590.5 L221.0 584.0 L231.0 595.0" stroke="#555" stroke-width="0.67" fill="none" />
<path d="M209.7 588.2 L209.7 592.5 L219.6 607.0 L232.8 598.0 L232.8 594.9" stroke="#151515" stroke-width="0.90" fill="none" />
<ellipse cx="222.4" cy="596" rx="1.6" ry="2.6" transform="rotate(-30 222.4 596)" stroke="#1e1e1e" stroke-width="0.8" fill="#fff"/>
<path d="M223.2 581.5 L223.6 586.0" stroke="#151515" stroke-width="1.12" fill="none" />
<path d="M231 575.5 L234.5 571.5 L238 575 L233 580.5 Z" stroke="#151515" stroke-width="0.90" fill="#888" />
<circle cx="236.6" cy="572.2" r="4.2" stroke="#151515" stroke-width="1" fill="#d8d8d8"/>
<circle cx="237.6" cy="571" r="1.6" fill="#f4f4f4"/>
<path d="M230.4 580.1 L221.0 593.0" stroke="#555" stroke-width="0.67" fill="none" stroke-dasharray="2 2"/>
<path d="M210.0 245.2 L219.0 260.0" stroke="#7a7a7a" stroke-width="0.67" fill="none" />
<path d="M56.3 348.2 L75.3 354.9" stroke="#7a7a7a" stroke-width="0.67" fill="none" />
<path d="M319.0 479.4 L331.0 482.4" stroke="#7a7a7a" stroke-width="0.67" fill="none" />
<path d="M75.8 519.0 L87.0 506.0" stroke="#7a7a7a" stroke-width="0.67" fill="none" />
<path d="M67.4 519.0 L67.4 590.2 L200.3 665.5 L257.3 633.1 L257.3 583.9 L254.3 582.4" stroke="#7a7a7a" stroke-width="0.67" fill="none" />
<path d="M67.4 519.0 L69.0 518.5" stroke="#7a7a7a" stroke-width="0.67" fill="none" />
<path d="M99.7 610.5 L101.4 608.7" stroke="#7a7a7a" stroke-width="0.67" fill="none" />
<path d="M79.4 558.5 L127.0 561.1" stroke="#7a7a7a" stroke-width="0.67" fill="none" />
<path d="M235.0 578.7 L247.6 585.4" stroke="#7a7a7a" stroke-width="0.67" fill="none" />
<path d="M227.5 601.8 L249.1 627.9" stroke="#7a7a7a" stroke-width="0.67" fill="none" />
<rect x="204" y="233" width="6" height="8" fill="#ffff00"/>
<text x="207.0" y="239.8" font-family="Liberation Sans" font-size="7.5" fill="#222" text-anchor="middle">8</text>
<rect x="45" y="341" width="6.299999999999997" height="8" fill="#ffff00"/>
<text x="48.1" y="347.8" font-family="Liberation Sans" font-size="7.5" fill="#222" text-anchor="middle">6</text>
<rect x="333" y="479.4" width="6" height="7.800000000000011" fill="#ffff00"/>
<text x="336.0" y="486.0" font-family="Liberation Sans" font-size="7.5" fill="#222" text-anchor="middle">7</text>
<rect x="67.9" y="518.8" width="7.099999999999994" height="7.2000000000000455" fill="#ffff00"/>
<text x="71.5" y="524.8" font-family="Liberation Sans" font-size="7.5" fill="#222" text-anchor="middle">2</text>
<rect x="94.3" y="612.3" width="4.700000000000003" height="7.100000000000023" fill="#f08080"/>
<text x="96.7" y="618.2" font-family="Liberation Sans" font-size="7.5" fill="#a03030" text-anchor="middle">1</text>
<text x="73.2" y="561.3" font-family="Liberation Sans" font-size="7.5" fill="#444" text-anchor="middle">3</text>
<text x="253.2" y="589.3" font-family="Liberation Sans" font-size="7.5" fill="#444" text-anchor="middle">5</text>
<text x="253.2" y="632.8" font-family="Liberation Sans" font-size="7.5" fill="#444" text-anchor="middle">4</text>
</svg>
<svg class="ic" style="left:7px;top:30px" width="36" height="162" viewBox="0 0 36 162">
<defs><linearGradient id="tbg" x1="0" y1="0" x2="0" y2="1"><stop offset="0" stop-color="#f6f6f6"/><stop offset="0.5" stop-color="#e6e6e6"/><stop offset="0.55" stop-color="#dadada"/><stop offset="1" stop-color="#cdcdcd"/></linearGradient></defs>
<!-- plus -->
<rect x="11.5" y="8.5" width="13.5" height="14.5" fill="url(#tbg)" stroke="#7d7d7d"/>
<path d="M25 12.5l2.6 3.2-2.6 3.2z" fill="#f0f0f0" stroke="#8a8a8a" stroke-width="0.5"/>
<path d="M13.3 15.8h9.8M18.2 11v9.7" stroke="#4e4e4e" stroke-width="2"/>
<!-- minus -->
<rect x="11.5" y="32.5" width="13.5" height="14.5" fill="url(#tbg)" stroke="#7d7d7d"/>
<path d="M11.5 36.8l-2.6 3.2 2.6 3.2z" fill="#f0f0f0" stroke="#8a8a8a" stroke-width="0.5"/>
<path d="M13.3 39.8h9.8" stroke="#4e4e4e" stroke-width="2"/>
<!-- grid -->
<rect x="11.5" y="61.5" width="13.5" height="14" fill="#f8f8f8" stroke="#7d7d7d"/>
<path d="M18.2 62v13M12 68.5h13" stroke="#d8d8d8" stroke-width="1.6"/>
<rect x="13.5" y="63.5" width="3.2" height="3.2" fill="#8c8c8c" stroke="#5e5e5e" stroke-width="0.8"/>
<rect x="19.8" y="63.5" width="3.2" height="3.2" fill="#8c8c8c" stroke="#5e5e5e" stroke-width="0.8"/>
<rect x="13.5" y="70.3" width="3.2" height="3.2" fill="#8c8c8c" stroke="#5e5e5e" stroke-width="0.8"/>
<rect x="19.8" y="70.3" width="3.2" height="3.2" fill="#8c8c8c" stroke="#5e5e5e" stroke-width="0.8"/>
<!-- square -->
<rect x="11.5" y="84.5" width="13.5" height="14" fill="#f8f8f8" stroke="#7d7d7d"/>
<rect x="14.6" y="87.6" width="7.4" height="7.6" fill="#d6d6d6" stroke="#4e4e4e" stroke-width="1.3"/>
<!-- list arrow -->
<rect x="9.5" y="137.5" width="4" height="4" fill="#f0f0f0" stroke="#9a9a9a" stroke-width="0.7"/>
<rect x="9.5" y="142.5" width="4" height="4" fill="#f0f0f0" stroke="#9a9a9a" stroke-width="0.7"/>
<rect x="9.5" y="147.5" width="4" height="4" fill="#f0f0f0" stroke="#9a9a9a" stroke-width="0.7"/>
<defs><linearGradient id="arg" x1="0" y1="0" x2="1" y2="0"><stop offset="0" stop-color="#f4f4f4"/><stop offset="0.7" stop-color="#e4e4e4"/><stop offset="1" stop-color="#a8a8a8"/></linearGradient></defs>
<rect x="14" y="137" width="13" height="15" fill="url(#arg)"/>
<path d="M14.5 137v15" stroke="#fff" stroke-width="1"/>
<path d="M16 144.5h6.5" stroke="#3e3e3e" stroke-width="1.8"/>
<path d="M21.5 141.2l3.8 3.3-3.8 3.3z" fill="#3e3e3e"/>
</svg>

<svg class="ic" style="left:1062px;top:680px" width="50" height="58" viewBox="0 0 50 58">
<g fill="none" stroke="#1a539e" stroke-width="3">
<circle cx="19.3" cy="18" r="7.3"/>
<circle cx="35" cy="18" r="7.3"/>
<circle cx="19.3" cy="35" r="7.3"/>
<circle cx="35" cy="35" r="7.3"/>
<path d="M14.5 23l9.6-9.8M39.8 23l-9.6-9.8M14.5 30l9.6 9.8M39.8 30l-9.6 9.8" stroke-width="2.4"/>
</g>
<g fill="#1a539e">
<path d="M27.15 9l1.6 3.5-1.6 2.5-1.6-2.5z"/>
<path d="M27.15 44l1.6-3.5-1.6-2.5-1.6 2.5z"/>
<path d="M10.5 26.5l3-1.8 1.8 1.8-1.8 1.8z"/>
<path d="M43.8 26.5l-3-1.8-1.8 1.8 1.8 1.8z"/>
</g>
<text x="9" y="55.6" font-family="Liberation Sans" font-weight="bold" font-size="10" fill="#1a539e" textLength="35" lengthAdjust="spacingAndGlyphs">Perkins</text>
<circle cx="46" cy="49" r="0.7" fill="#7aa0cc"/>
</svg>

</body></html>
